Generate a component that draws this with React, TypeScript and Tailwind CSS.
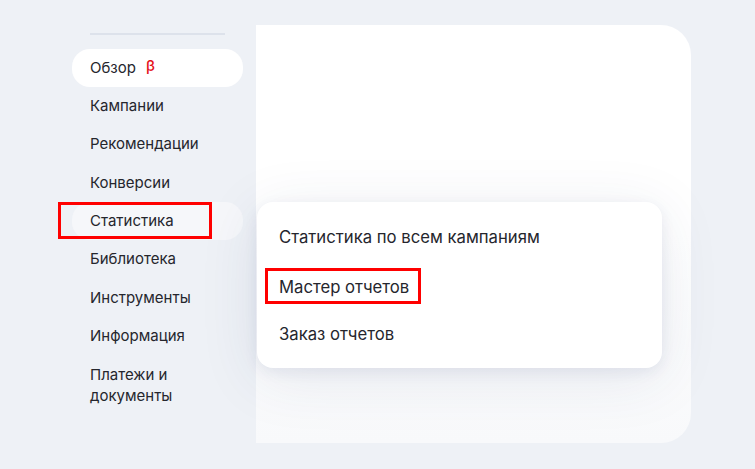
const items = [
  "Кампании",
  "Рекомендации",
  "Конверсии",
];
const items2 = ["Библиотека", "Инструменты", "Информация"];

const font = { fontFamily: "Inter, 'Noto Sans', sans-serif" };

export default function App() {
  return (
    <div
      className="relative flex h-[469px] w-[755px] overflow-hidden bg-[#eef1f6] text-[#25262d]"
      style={font}
    >
      <aside className="ml-[72px] mt-[33px] flex w-[171px] flex-col">
        <div className="mx-[18px] mb-[14px] h-[2px] bg-[#dde2eb]" />
        <div className="flex h-[38.3px] items-center rounded-[18px] bg-white px-[18px] text-[15px]">
          Обзор
          <span className="ml-[10px] -mt-[4px] text-[15px] font-medium text-[#e5101b]">β</span>
        </div>
        {items.map((t) => (
          <div key={t} className="flex h-[38.3px] items-center px-[18px] text-[15px]">
            {t}
          </div>
        ))}
        <div className="relative flex h-[38.3px] items-center rounded-[18px] bg-[#f6f7fa] px-[18px] text-[15px]">
          Статистика
          <div className="absolute -left-[14px] top-0 h-[37px] w-[154px] border-[3px] border-[#ff0000]" />
        </div>
        {items2.map((t) => (
          <div key={t} className="flex h-[38.3px] items-center px-[18px] text-[15px]">
            {t}
          </div>
        ))}
        <div className="px-[18px] pt-[9px] text-[15px] leading-[21px]">
          Платежи и
          <br />
          документы
        </div>
      </aside>

      <main className="ml-[13px] mt-[25px] h-[418px] w-[435px] rounded-r-[30px] bg-gradient-to-b from-white via-white to-[#f8f9fb]" />

      <div className="absolute left-[257px] top-[202px] flex h-[166px] w-[405px] flex-col rounded-[16px] bg-white px-[22px] pt-[22px] text-[16.7px] shadow-[0_4px_14px_rgba(40,55,110,0.08),0_10px_60px_rgba(40,55,110,0.10)]">
        <div className="leading-[26px]">Статистика по всем кампаниям</div>
        <div className="relative mt-[24px] leading-[26px]">
          Мастер отчетов
          <div className="absolute -left-[14px] -top-[6px] h-[36px] w-[156px] border-[3px] border-[#ff0000]" />
        </div>
        <div className="mt-[21px] leading-[26px]">Заказ отчетов</div>
      </div>
    </div>
  );
}
